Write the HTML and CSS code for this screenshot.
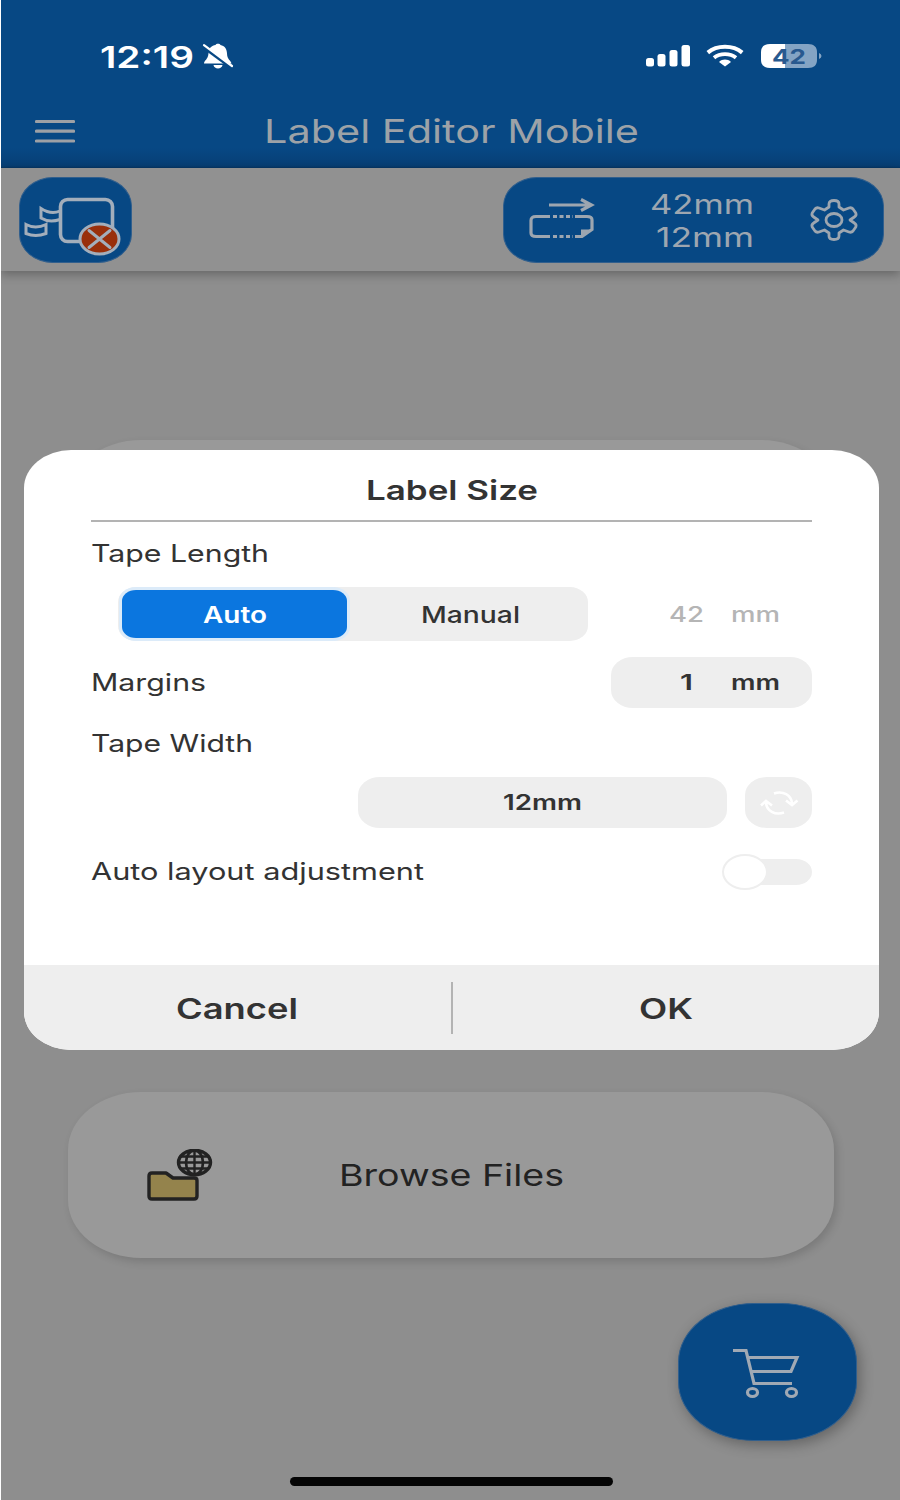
FILE: index.html
```html
<!DOCTYPE html>
<html lang="en">
<head>
<meta charset="utf-8">
<title>Label Editor Mobile</title>
<link rel="stylesheet" href="styles.css">
</head>
<body>
<div class="screen">
  <header class="header">
    <div class="status">
      <svg class="label time" width="94" height="40"><text x="0" y="28.500" textLength="94" lengthAdjust="spacingAndGlyphs">12:19</text></svg>
      <svg class="bell" width="32" height="28" viewBox="0 0 32 28">
        <path fill="#fff" d="M2 21.500c0-3 4-4 4.500-10C6.500 6 10 3.400 13.500 3 14 1.300 18 1.300 18.500 3c4 .8 6.500 4 6.500 8.500 0 6 4 7 4.500 10zM11.500 23h9c-.5 4.500-8.500 4.500-9 0z"/>
        <path d="M0 3.500l29 21.500" stroke="#074884" stroke-width="4"/>
        <path d="M2 3.200l28 20.800" stroke="#fff" stroke-width="2.200" stroke-linecap="round"/>
      </svg>
      <svg class="signal" width="46" height="24" viewBox="0 0 46 24" fill="#fff">
        <rect x="1" y="14" width="8" height="8.500" rx="2.500"/><rect x="12.500" y="10" width="8" height="12.500" rx="2.500"/><rect x="24.500" y="6" width="8" height="16.500" rx="2.500"/><rect x="36.500" y="1" width="8.500" height="21.500" rx="2.500"/>
      </svg>
      <svg class="wifi" width="38" height="24" viewBox="0 0 38 24" fill="none" stroke="#fff">
        <path d="M1.800 8.600C11 .8 27 .8 36.200 8.600" stroke-width="4"/>
        <path d="M8 13.800c6-5 16-5 22 0" stroke-width="3.800"/>
        <path d="M13 18c3.500-3.200 8.500-3.200 12 0l-6 4.600z" fill="#fff" stroke="none"/>
      </svg>
      <svg class="battery" width="62" height="26" viewBox="0 0 62 26">
        <path fill="#fff" d="M25 1v24H10C4 25 1 22 1 17V9C1 4 4 1 10 1z"/>
        <path fill="#84a4c4" d="M25 1h23c6 0 9 3 9 8v8c0 5-3 8-9 8H25zM59 10q2.500 1 2.500 3T59 16z"/>
        <text x="12" y="20.500" textLength="34" lengthAdjust="spacingAndGlyphs" class="charge">42</text>
      </svg>
    </div>
    <div class="titlebar">
      <svg class="menu" width="40" height="26" viewBox="0 0 40 26"><path d="M1.500 2.500h37M1.500 12.200h37M1.500 22h37" stroke="#9da0a5" stroke-width="3.200" stroke-linecap="round"/></svg>
      <svg class="label app-title" width="375" height="40"><text x="0" y="32" textLength="375" lengthAdjust="spacingAndGlyphs">Label Editor Mobile</text></svg>
    </div>
  </header>

  <div class="toolbar">
    <div class="tile">
      <svg width="112" height="86" viewBox="1 1 112 86" fill="none" stroke="#a3aebb" stroke-width="3.600">
        <rect x="41.500" y="22.500" width="52" height="42" rx="7"/>
        <path d="M41 34q-9 4-19-2.500v9.500q8 5 19 1.500" stroke-width="3"/>
        <path d="M7 47.500q9.500 5 20 0v9q-10.500 4-20 0z" stroke-width="3"/>
        <ellipse cx="80.500" cy="62" rx="19.500" ry="15" fill="#992f0b" stroke-width="3"/>
        <path d="M70 53.500l21 17M91 53.500l-21 17" stroke-width="3" stroke-linecap="round"/>
      </svg>
    </div>
    <div class="size-pill">
      <svg class="tape" width="68" height="42" viewBox="0 0 68 42" fill="none" stroke="#9da6b0" stroke-width="3.200">
        <path d="M21 7h41M53 1.500l10.500 5.500L53 12.500"/>
        <path d="M22 18.500H8q-5 0-5 4v12.500q0 3.500 5 3.500h14M47 18.500h12q5 0 5 3.500v9.500l-10 7h-7"/>
        <path d="M25 18.500h20M25 38.500h20" stroke-dasharray="4 2.500"/>
        <path d="M53 38v-6.500h11z" fill="#9da6b0" stroke="none"/>
      </svg>
      <div class="dims">
        <svg class="label" width="104" height="33"><text x="0" y="27.500" textLength="104" lengthAdjust="spacingAndGlyphs">42mm</text></svg>
        <svg class="label" width="98" height="33"><text x="0" y="27.500" textLength="98" lengthAdjust="spacingAndGlyphs">12mm</text></svg>
      </div>
      <svg class="gear" width="50" height="42" viewBox="0 0 50 42" fill="none" stroke="#9da6b0" stroke-width="2.800" stroke-linejoin="round">
        <path d="M20 5q0-3.500 5-3.500t5 3.500v3l4.500 3 5.500-2q2.500-.8 4 1l2.800 4q1 2.500-1.500 4L41 21l4.300 3q2.500 1.500 1.500 4L44 32q-1.500 1.800-4 1l-5.500-2L30 34v3q0 3.500-5 3.500T20 37v-3l-4.500-3L10 33q-2.500.8-4-1l-2.800-4q-1-2.500 1.500-4L9 21l-4.300-3q-2.500-1.500-1.500-4L6 10q1.500-1.800 4-1l5.500 2L20 8z"/>
        <ellipse cx="25" cy="21" rx="8" ry="6.500"/>
      </svg>
    </div>
  </div>

  <main class="home">
    <div class="card card-top"></div>
    <div class="card browse">
      <svg class="folder" width="66" height="52" viewBox="0 0 66 52" fill="none" stroke="#222" stroke-width="3.400" stroke-linejoin="round">
        <path d="M5 24h14l7 5h21q3 0 3 2.500V47q0 3-3 3H5q-3 0-3-3V27q0-3 3-3z" fill="#94834c"/>
        <ellipse cx="47.500" cy="13.500" rx="16" ry="12.200"/>
        <ellipse cx="47.500" cy="13.500" rx="8.500" ry="12.200" stroke-width="2.700"/>
        <path d="M47.500 1.500v24M32 13.500h31M34 7.500h27M34 19.500h27" stroke-width="2.400"/>
      </svg>
      <svg class="label browse-text" width="225" height="40"><text x="0" y="31" textLength="225" lengthAdjust="spacingAndGlyphs">Browse Files</text></svg>
    </div>
    <div class="fab">
      <svg width="68" height="52" viewBox="0 0 68 52" fill="none" stroke="#a0a9b4" stroke-width="3.200">
        <path d="M1 3.500h13l8 33h38M16 10.500h49l-6 14H19.500"/>
        <ellipse cx="20.500" cy="45.500" rx="5" ry="4"/><ellipse cx="59.500" cy="45.500" rx="5" ry="4"/>
      </svg>
    </div>
    <div class="home-indicator"></div>
  </main>

  <section class="modal">
    <div class="modal-body">
      <div class="modal-title"><svg class="label" width="172" height="40"><text x="0" y="35" textLength="172" lengthAdjust="spacingAndGlyphs">Label Size</text></svg></div>
      <div class="row row-length"><svg class="label" width="178" height="40"><text x="0" y="28" textLength="178" lengthAdjust="spacingAndGlyphs">Tape Length</text></svg></div>
      <div class="row row-mode">
        <div class="segmented">
          <div class="seg active"><svg class="label" width="64" height="40"><text x="0" y="29" textLength="64" lengthAdjust="spacingAndGlyphs">Auto</text></svg></div>
          <div class="seg manual"><svg class="label" width="99" height="40"><text x="0" y="29" textLength="99" lengthAdjust="spacingAndGlyphs">Manual</text></svg></div>
        </div>
        <div class="field plain">
          <svg class="label" width="35" height="40"><text x="0" y="27.500" textLength="35" lengthAdjust="spacingAndGlyphs">42</text></svg>
          <svg class="label unit" width="49" height="40"><text x="0" y="27.500" textLength="49" lengthAdjust="spacingAndGlyphs">mm</text></svg>
        </div>
      </div>
      <div class="row row-margins">
        <svg class="label" width="115" height="40"><text x="0" y="28.500" textLength="115" lengthAdjust="spacingAndGlyphs">Margins</text></svg>
        <div class="field">
          <svg class="label one" width="13" height="40"><text x="0" y="28" textLength="13" lengthAdjust="spacingAndGlyphs">1</text></svg>
          <svg class="label unit" width="49" height="40"><text x="0" y="28" textLength="49" lengthAdjust="spacingAndGlyphs">mm</text></svg>
        </div>
      </div>
      <div class="row row-width"><svg class="label" width="162" height="40"><text x="0" y="28.500" textLength="162" lengthAdjust="spacingAndGlyphs">Tape Width</text></svg></div>
      <div class="row row-select">
        <div class="select"><svg class="label" width="79" height="40"><text x="0" y="27" textLength="79" lengthAdjust="spacingAndGlyphs">12mm</text></svg></div>
        <div class="refresh">
          <svg width="40" height="24" viewBox="0 0 40 24" fill="none" stroke="#fff" stroke-width="2.600">
            <path d="M15 2.500c9-3 17.500 1.500 18 10M27 9.500l6 4.500 5.500-4.500M25 21.500c-9 3-17.500-1.500-18-10M2 14.500L7 10l6 4.500"/>
          </svg>
        </div>
      </div>
      <div class="row row-auto">
        <svg class="label" width="333" height="40"><text x="0" y="28" textLength="333" lengthAdjust="spacingAndGlyphs">Auto layout adjustment</text></svg>
        <div class="switch"><div class="knob"></div></div>
      </div>
    </div>
    <footer class="modal-footer">
      <div class="action"><svg class="label" width="122" height="40"><text x="0" y="30.500" textLength="122" lengthAdjust="spacingAndGlyphs">Cancel</text></svg></div>
      <div class="separator"></div>
      <div class="action"><svg class="label" width="54" height="40"><text x="0" y="30.500" textLength="54" lengthAdjust="spacingAndGlyphs">OK</text></svg></div>
    </footer>
  </section>
</div>
</body>
</html>
```

FILE: styles.css
```css
* { box-sizing: border-box; }
body { margin: 0; background: #fff; font-family: Inter, "Liberation Sans", sans-serif; }
svg { display: block; flex: none; }
.screen { position: relative; display: flex; flex-direction: column; width: 899px; height: 1500px; margin-left: 1px; background: #8e8e8e; overflow: hidden; }
.label { overflow: visible; font-size: 24px; fill: #333; }

.header { height: 168px; flex: none; background: linear-gradient(#074884 0, #074884 148px, #073f75 166px, #063663 168px); }
.status { display: flex; align-items: center; height: 80px; padding: 32px 0 0 99px; }
.time { margin-top: 6px; font-size: 30px; font-weight: 600; fill: #fff; }
.bell { margin-left: 8px; }
.signal { margin-left: 411px; }
.wifi { margin-left: 15px; }
.battery { margin-left: 16px; }
.charge { font-size: 20px; font-weight: 700; fill: #28598f; }
.titlebar { display: flex; align-items: center; height: 68px; padding: 32px 0 0 34px; }
.menu { margin-top: 3px; }
.app-title { font-size: 33px; fill: #9da2a7; margin: 1px 0 0 189px; }

.toolbar { display: flex; justify-content: space-between; align-items: flex-start; height: 103px; flex: none; padding: 9px 16px 0 18px; background: #919191; box-shadow: 0 3px 10px rgba(0,0,0,.3); }
.tile, .size-pill { height: 86px; background: #074884; border: 1px solid #315f8d; border-radius: 34px / 29px; }
.tile { width: 113px; }
.size-pill { display: flex; width: 381px; padding-left: 24px; }
.tape { margin-top: 20px; }
.dims { display: flex; flex-direction: column; align-items: flex-end; width: 106px; margin: 8px 0 0 52px; }
.dims .label { font-size: 27.500px; fill: #9da6b0; }
.gear { margin: 21px 0 0 55px; }

.home { display: flex; flex-direction: column; height: 1229px; }
.card { width: 766px; margin-left: 67px; flex: none; background: #999; border-radius: 73px / 58px; box-shadow: 3px 4px 8px rgba(0,0,0,.14); }
.card-top { height: 166px; margin-top: 169px; }
.browse { display: flex; align-items: center; height: 166px; margin-top: 486px; padding-left: 79px; }
.browse-text { font-size: 30px; fill: #222; margin-left: 126px; }
.folder { margin-top: -1px; }
.fab { display: flex; align-items: center; justify-content: center; align-self: flex-end; flex: none; width: 179px; height: 138px; margin: 45px 43px 0 0; padding: 2px 3px 0 0; background: #074884; border: 1px solid #315f8d; border-radius: 76px / 59px; box-shadow: 3px 4px 14px rgba(0,0,0,.3); }
.home-indicator { flex: none; width: 323px; height: 9px; margin: 36px 0 0 289px; background: #050505; border-radius: 5px; }

.modal { position: absolute; left: 23px; top: 450px; display: flex; flex-direction: column; width: 855px; height: 600px; background: #fff; border-radius: 47px / 38px; overflow: hidden; }
.modal-body { flex: 1; padding: 0 67px; }
.modal-title { display: flex; align-items: center; justify-content: center; height: 70px; }
.modal-title .label { font-size: 27.500px; font-weight: 600; }
.row { display: flex; align-items: center; }
.row-length { height: 66px; border-top: 2px solid #b3b3b3; }
.row-mode { height: 56px; padding-left: 27px; }
.segmented { display: flex; width: 470px; height: 54px; padding: 3px; background: #eee; border-radius: 18px / 15px; }
.seg { display: flex; flex: 1; align-items: center; justify-content: center; }
.seg .label { font-size: 22.500px; font-weight: 500; }
.seg.active { flex: none; width: 225px; margin-left: 1px; background: #0b76df; border-radius: 14px / 11px; box-shadow: 0 0 0 3px #dcebf9; }
.seg.active .label { font-weight: 600; fill: #fff; }
.seg.manual { padding-left: 8px; }
.row-margins { justify-content: space-between; height: 80px; }
.field { display: flex; align-items: center; justify-content: flex-end; width: 201px; height: 51px; padding-right: 32px; background: #eee; border-radius: 22px / 18px; }
.field .label { font-size: 21px; font-weight: 600; }
.unit { margin-left: 27px; }
.one { margin-right: 11px; }
.field.plain { background: none; margin-left: 23px; }
.field.plain .label { fill: #b5b5b5; font-weight: 500; }
.row-width { height: 42px; }
.row-select { justify-content: flex-end; gap: 18px; height: 77px; }
.select, .refresh { display: flex; align-items: center; justify-content: center; height: 51px; background: #eee; border-radius: 22px / 18px; }
.select { width: 369px; }
.select .label { font-size: 21px; font-weight: 600; }
.refresh { width: 67px; }
.row-auto { justify-content: space-between; height: 61px; }
.switch { display: flex; align-items: center; width: 86px; height: 26px; background: #eee; border-radius: 16px / 13px; }
.knob { flex: none; width: 46px; height: 36px; margin-left: -4px; background: #fff; border: 2px solid #eee; border-radius: 50%; }
.modal-footer { display: flex; align-items: center; height: 85px; flex: none; background: #eee; }
.action { display: flex; flex: 1; justify-content: center; }
.action .label { font-size: 28.500px; font-weight: 600; }
.separator { width: 2px; height: 52px; background: #b3b3b3; }
```
